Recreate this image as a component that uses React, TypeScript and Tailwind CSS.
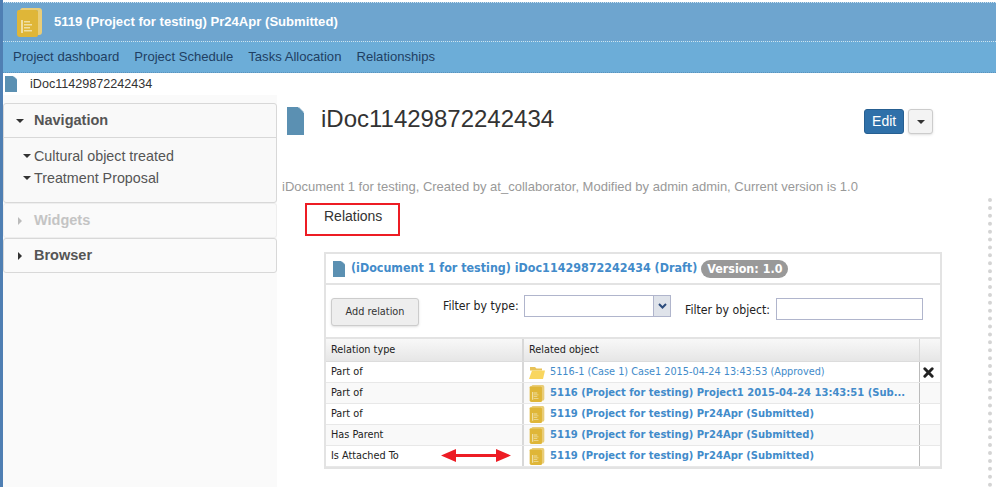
import React from 'react';

const sans = { fontFamily: '"Liberation Sans", Arial, sans-serif' };
const table = { fontFamily: '"DejaVu Sans Condensed", "DejaVu Sans", Verdana, sans-serif' };

const ProjectIcon = ({ className }: { className: string }) => (
  <svg viewBox="0 0 25 29" className={className}>
    <path d="M5 0h17a3 3 0 0 1 3 3v21a3 3 0 0 1-3 3h-1V4a2 2 0 0 0-2-2H3a3 3 0 0 1 2-2z" fill="#e9cd78" />
    <path d="M2 2h17a2 2 0 0 1 2 2v23a2 2 0 0 1-2 2H3a3 3 0 0 1-3-3V4a2 2 0 0 1 2-2z" fill="#dfb638" />
    <path d="M4 12h2v13H4zM7 13h6v1.500H7zM7 16h8v1.500H7zM7 19h6v1.500H7zM7 22h8v1.500H7z" fill="#f0dfa4" />
  </svg>
);

const DocIcon = ({ className }: { className: string }) => (
  <svg viewBox="0 0 17 28" className={className} preserveAspectRatio="none">
    <path d="M0 0h11l6 6v22H0z" fill="#5b90b2" />
    <path d="M12 0l5 5h-5z" fill="#5b90b2" opacity="0.55" />
  </svg>
);

const FolderIcon = () => (
  <svg viewBox="0 0 16 13" className="w-4 h-[13px] shrink-0">
    <path d="M1 1h5l1.500 1.500H13v2H1z" fill="#e8c258" />
    <path d="M3 4.500h13l-2 8.500H0z" fill="#f9d65f" />
  </svg>
);

const Caret = ({ dir, light }: { dir: 'down' | 'right'; light?: boolean }) =>
  dir === 'down' ? (
    <span className="w-0 h-0 border-x-[4px] border-x-transparent border-t-[4px] border-t-[#333]" />
  ) : (
    <span className={`w-0 h-0 border-y-[4px] border-y-transparent border-l-[4px] ${light ? 'border-l-[#bbb]' : 'border-l-[#333]'}`} />
  );

const rows = [
  { type: 'Part of', text: '5116-1 (Case 1) Case1 2015-04-24 13:43:53 (Approved)', folder: true, del: true },
  { type: 'Part of', text: '5116 (Project for testing) Project1 2015-04-24 13:43:51 (Sub...', odd: true },
  { type: 'Part of', text: '5119 (Project for testing) Pr24Apr (Submitted)' },
  { type: 'Has Parent', text: '5119 (Project for testing) Pr24Apr (Submitted)', odd: true },
  { type: 'Is Attached To', text: '5119 (Project for testing) Pr24Apr (Submitted)', arrow: true },
];

export default function App() {
  return (
    <div className="w-[996px] h-[487px] overflow-hidden bg-white border-l-[3px] border-l-[#4f7fb3]" style={sans}>
      {/* Header */}
      <div className="h-[39px] mt-[2px] bg-[#6ea5cf] border-t border-dotted border-t-[#cfe3ee] flex items-center pl-[14px]">
        <ProjectIcon className="w-[25px] h-[29px]" />
        <span className="ml-3 text-[13.100px] font-bold text-white">5119 (Project for testing) Pr24Apr (Submitted)</span>
      </div>
      <div className="h-[32px] bg-[#6cadd8] border-t border-dotted border-t-[#cfe3ee] border-b border-b-[#5b93bd] flex items-center pl-[10px] gap-[15px] text-[13.100px] text-[#1f3f63]">
        <span>Project dashboard</span>
        <span>Project Schedule</span>
        <span>Tasks Allocation</span>
        <span>Relationships</span>
      </div>

      {/* Breadcrumb */}
      <div className="h-[22px] flex items-center pl-[2px] text-[12.600px] text-[#333]">
        <DocIcon className="w-3 h-4" />
        <span className="ml-[13px]">iDoc11429872242434</span>
      </div>

      <div className="flex">
        {/* Sidebar */}
        <div className="w-[274px] h-[392px] shrink-0 bg-[#fafafa] pt-[8px]">
          <div className="border border-[#d8d8d8] rounded-[3px] h-[100px] bg-[#f9f9f9]">
            <div className="h-[34px] border-b border-b-[#d8d8d8] flex items-center pl-[12px] gap-[10px] text-[14.500px] font-bold text-[#555]">
              <Caret dir="down" />
              <span>Navigation</span>
            </div>
            <div className="pl-[19px] pt-[7px] text-[14.300px] leading-[22px] text-[#555]">
              <div className="flex items-center gap-[3px]"><Caret dir="down" /><span>Cultural object treated</span></div>
              <div className="flex items-center gap-[3px]"><Caret dir="down" /><span>Treatment Proposal</span></div>
            </div>
          </div>
          <div className="h-[35px] border border-[#eeeeee] rounded-[3px] flex items-center pl-[14px] gap-[12px] text-[14.500px] font-bold text-[#c4c4c4]">
            <Caret dir="right" light />
            <span>Widgets</span>
          </div>
          <div className="h-[35px] border border-[#d8d8d8] rounded-[3px] flex items-center pl-[14px] gap-[12px] text-[14.500px] font-bold text-[#555]">
            <Caret dir="right" />
            <span>Browser</span>
          </div>
        </div>

        {/* Main */}
        <div className="relative flex-1 pl-[10px] pt-[12px]">
          <div className="flex items-start">
            <DocIcon className="w-[17px] h-[28px] shrink-0" />
            <span className="ml-[17px] -mt-[2px] text-[24px] leading-[27px] text-[#333]">iDoc11429872242434</span>
            <div className="ml-[310px] flex gap-[4px] pt-[2px]">
              <button className="w-[40px] h-[25px] rounded-[3px] bg-[#2f70a9] border border-[#265f91] text-white text-[14px]">Edit</button>
              <button className="w-[25px] h-[25px] rounded-[3px] bg-[#f3f3f3] border border-[#ccc] shadow-sm flex items-center justify-center"><Caret dir="down" /></button>
            </div>
          </div>
          <p className="mt-[45px] -ml-[5px] text-[13px] leading-[14px] text-[#999]">iDocument 1 for testing, Created by at_collaborator, Modified by admin admin, Current version is 1.0</p>

          <div className="ml-[18px] mt-[9px] w-[95px] h-[33px] border-2 border-[#ed1c24] pl-[17px] pt-[1px] text-[14px] text-[#333]">Relations</div>

          {/* Relations widget */}
          <div className="ml-[37px] mt-[16px] w-[618px] border-2 border-[#e3e3e3]" style={table}>
            <div className="h-[31px] border-b-2 border-b-[#e3e3e3] flex items-center pl-[7px] text-[12.400px] font-bold text-[#428bca]">
              <DocIcon className="w-3 h-4" />
              <span className="ml-[6px]">(iDocument 1 for testing) iDoc11429872242434 (Draft)</span>
              <span className="ml-[4px] h-[18px] leading-[18px] px-[6px] rounded-[9px] bg-[#999] text-white">Version: 1.0</span>
            </div>
            <div className="h-[52px] flex items-start text-[12.200px] leading-[16px] text-[#222]">
              <button className="ml-[5px] mt-[13px] w-[88px] h-[28px] rounded-[3px] border border-[#ccc] bg-[#eeeeee] shadow-sm text-[10.800px] text-[#333]">Add relation</button>
              <span className="ml-[24px] mt-[13px] w-[76px] whitespace-nowrap">Filter by type:</span>
              <div className="ml-[5px] mt-[10px] w-[147px] h-[22px] border border-[#b0b5cc] flex justify-end">
                <span className="w-[17px] bg-[#dfe3ea] border-l border-l-[#b0b5cc] flex items-center justify-center">
                  <svg viewBox="0 0 9 6" className="w-[9px] h-[6px]"><path d="M1 1l3.500 3.500L8 1" fill="none" stroke="#2c4c7c" strokeWidth="2" /></svg>
                </span>
              </div>
              <span className="ml-[14px] mt-[17px] w-[86px] whitespace-nowrap">Filter by object:</span>
              <div className="ml-[5px] mt-[13px] w-[147px] h-[22px] border border-[#b0b5cc]" />
            </div>
            <div className="border-t-2 border-t-[#e3e3e3] text-[10.800px]">
              <div className="h-[23px] flex bg-gradient-to-b from-[#f8f8f8] to-[#e6e6e6] border-b border-b-[#dcdcdc] text-[#222]">
                <div className="w-[198px] pl-[5px] flex items-center border-r-2 border-r-[#d8d8d8]">Relation type</div>
                <div className="w-[396px] pl-[5px] flex items-center border-r border-r-[#d8d8d8]">Related object</div>
              </div>
              {rows.map((r, i) => (
                <div key={i} className={`h-[21px] flex border-b border-b-[#e8e8e8] ${r.odd ? 'bg-[#f9f9f9]' : 'bg-white'}`}>
                  <div className="relative w-[198px] pl-[5px] pt-[1px] flex items-center border-r-2 border-r-[#d8d8d8] text-[#222]">
                    {r.type}
                    {r.arrow && (
                      <svg viewBox="0 0 70 15" className="absolute left-[115px] top-[2px] w-[70px] h-[15px]">
                        <path d="M0 7.500L15 1v5h40V1l15 6.500L55 14V9H15v5z" fill="#ed1c24" />
                      </svg>
                    )}
                  </div>
                  <div className={`w-[396px] pl-[5px] flex items-center gap-[5px] border-r border-r-[#bbb] whitespace-nowrap text-[#428bca] ${r.folder ? '' : 'font-bold text-[11.100px]'}`}>
                    {r.folder ? <FolderIcon /> : <ProjectIcon className="w-4 h-[17px] shrink-0" />}
                    <span className="pt-[1px]">{r.text}</span>
                  </div>
                  <div className="flex-1 flex items-center pl-[3px]">
                    {r.del && (
                      <svg viewBox="0 0 12 12" className="w-[11px] h-[11px]"><path d="M2 2l8 8M10 2l-8 8" stroke="#222" strokeWidth="3.200" strokeLinecap="round" /></svg>
                    )}
                  </div>
                </div>
              ))}
            </div>
          </div>

          {/* dotted scroll edge */}
          <div className="absolute left-[711px] top-[103px] bottom-0 w-[5px] border-l-[4px] border-dotted border-l-[#d4d4d4]" />
        </div>
      </div>
    </div>
  );
}
